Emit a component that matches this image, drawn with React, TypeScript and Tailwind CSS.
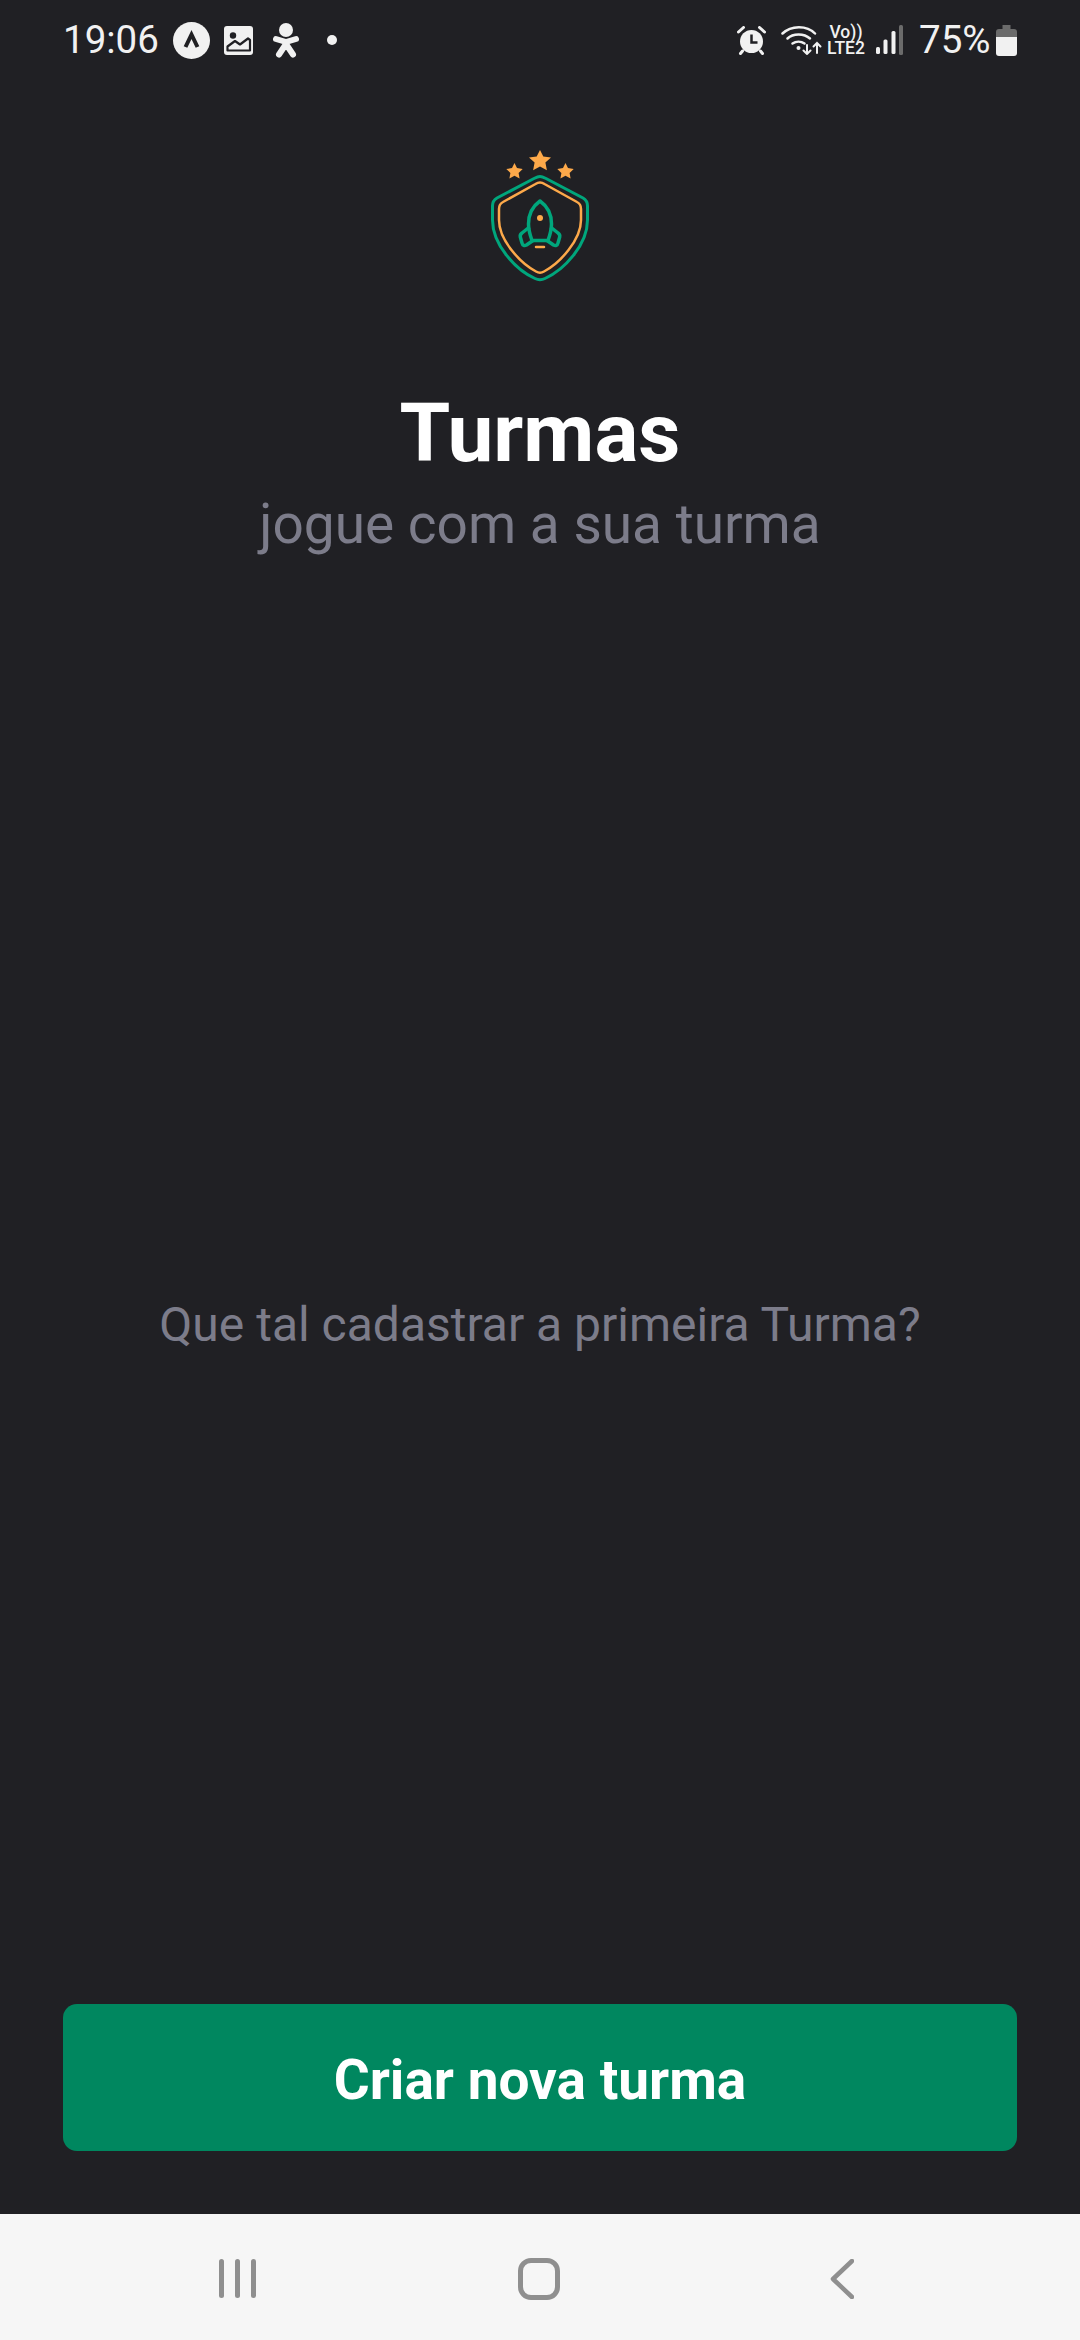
import React from 'react';

function Logo() {
  return (
    <svg width="100" height="134" viewBox="0 0 100 134" fill="none">
      <g fill="#FDA94A">
        <path d="M50 0l3.300 6.500 7.700 1-5.600 5.100 1.500 7.600-6.900-3.600-6.900 3.600 1.500-7.600-5.600-5.100 7.700-1z" />
        <path d="M24.500 13l2.500 5.100 5.700.8-4.100 4 1 5.600-5.100-2.700-5.100 2.700 1-5.600-4.100-4 5.700-.8z" />
        <path d="M75.500 13l2.500 5.100 5.700.8-4.100 4 1 5.600-5.100-2.700-5.100 2.700 1-5.600-4.100-4 5.700-.8z" />
      </g>
      <path
        d="M50 26.500C48 26.500 46 27.500 44 28.500L7 48C3.500 50 2.500 52 2.500 56V70C2.500 95 26 120 45 128.500C48 130 52 130 55 128.500C74 120 97.500 95 97.500 70V56C97.500 52 96.500 50 93 48L56 28.500C54 27.500 52 26.500 50 26.500Z"
        stroke="#00A67C"
        strokeWidth="3"
      />
      <path
        d="M50 32.500C48.500 32.500 47 33 45.500 34L13 52C10 53.500 9 55.500 9 59V70C9 90 30 113 46 121.500C48.500 123 51.500 123 54 121.500C70 113 91 90 91 70V59C91 55.500 90 53.500 87 52L54.500 34C53 33 51.500 32.500 50 32.500Z"
        stroke="#FDA94A"
        strokeWidth="2.500"
      />
      <path
        d="M50 51C43 56 38.500 64 38.500 74C38.500 80 40 85 42 90.500H58C60 85 61.500 80 61.500 74C61.500 64 57 56 50 51Z"
        stroke="#00A67C"
        strokeWidth="3.500"
        strokeLinejoin="round"
      />
      <path d="M39.500 77L32 83C30.500 84 30 85.500 30.300 87L32 93C32.500 95.500 34.500 96 36.500 95L43 90.500" stroke="#00A67C" strokeWidth="3.500" strokeLinejoin="round" />
      <path d="M60.500 77L68 83C69.500 84 70 85.500 69.700 87L68 93C67.500 95.500 65.500 96 63.500 95L57 90.500" stroke="#00A67C" strokeWidth="3.500" strokeLinejoin="round" />
      <circle cx="50" cy="68" r="3" fill="#FDA94A" />
      <path d="M46 97H54" stroke="#FDA94A" strokeWidth="2.500" strokeLinecap="round" />
    </svg>
  );
}

function LeftIcons() {
  return (
    <div className="flex items-center">
      <svg width="37" height="37" viewBox="0 0 37 37">
        <circle cx="18.500" cy="18.500" r="18.500" fill="#f1f1f1" />
        <path d="M12.500 25L18.500 12.500 24.500 25" fill="none" stroke="#202024" strokeWidth="4" />
      </svg>
      <svg width="29" height="29" viewBox="0 0 29 29" className="ml-[14px]">
        <rect width="29" height="29" rx="3" fill="#f1f1f1" />
        <circle cx="9" cy="9.500" r="3.200" fill="#202024" />
        <path d="M3.500 24.500V20.500L11 15 16 18.500 24 12.500 26 14V24.500Z" fill="none" stroke="#202024" strokeWidth="2.200" strokeLinejoin="round" />
      </svg>
      <svg width="26" height="35" viewBox="0 0 26 35" className="ml-[20px]">
        <circle cx="13" cy="7" r="7" fill="#f1f1f1" />
        <path d="M3 16L13 19 23 16M13 19V21M13 21L6 31.500M13 21L20 31.500" fill="none" stroke="#f1f1f1" strokeWidth="6" strokeLinecap="round" strokeLinejoin="round" />
      </svg>
      <div className="ml-[28px] size-[10px] rounded-full bg-[#f1f1f1]" />
    </div>
  );
}

function RightIcons() {
  return (
    <div className="flex items-center">
      <svg width="29" height="29" viewBox="0 0 29 29">
        <circle cx="14.500" cy="15.500" r="11.500" fill="#f1f1f1" />
        <path d="M14.500 8.500V16.500H20.500" fill="none" stroke="#202024" strokeWidth="2.500" />
        <path d="M1.500 6L6.500 1.500M27.500 6L22.500 1.500M5.500 25L3.500 27.500M23.500 25L25.500 27.500" stroke="#f1f1f1" strokeWidth="3" strokeLinecap="round" />
      </svg>
      <svg width="41" height="30" viewBox="0 0 41 30" className="ml-[15px]">
        <g fill="none" stroke="#f1f1f1" strokeWidth="2.500" strokeLinecap="round">
          <path d="M1.500 8.500C10 0 26 0 34 8.500" />
          <path d="M6.500 13.500C12 8 23 8 29 13.500" />
          <path d="M11.500 18.500C15 16 20 16 23.500 18.500" />
          <path d="M26 20V29M22.500 25.500L26 29 29.500 25.500" strokeWidth="2" />
          <path d="M36 28V18M32.500 21.500L36 18 39.500 21.500" strokeWidth="2" />
        </g>
        <circle cx="17.500" cy="23" r="2" fill="#f1f1f1" />
      </svg>
      <div className="ml-[4px] flex w-[40px] flex-col items-center text-[17.500px] leading-[16px] font-medium text-[#f1f1f1]">
        <span>Vo))</span>
        <span>LTE2</span>
      </div>
      <svg width="27" height="30" viewBox="0 0 27 30" className="ml-[10px]">
        <rect x="0" y="22" width="4" height="7" rx="1.500" fill="#f1f1f1" />
        <rect x="7.500" y="14.500" width="4" height="14.500" rx="1.500" fill="#f1f1f1" />
        <rect x="15.500" y="6" width="4" height="23" rx="1.500" fill="#f1f1f1" />
        <rect x="23" y="0" width="4" height="30" rx="1.500" fill="#6b6b6b" />
      </svg>
      <span className="ml-[16px] w-[69px] text-[38.500px] leading-[40px] text-[#f1f1f1]">75%</span>
      <svg width="21" height="31" viewBox="0 0 21 31" className="ml-[8px]">
        <path d="M6.500 0H14.500V4H18C20 4 21 5 21 7V12H0V7C0 5 1 4 3 4H6.500Z" fill="#6b6b6b" />
        <path d="M0 12H21V28C21 30 20 31 18 31H3C1 31 0 30 0 28Z" fill="#f1f1f1" />
      </svg>
    </div>
  );
}

export default function App() {
  return (
    <div className="flex h-[2340px] w-[1080px] flex-col bg-[#202024] font-['Roboto',sans-serif]">
      <div className="flex h-[80px] items-center justify-between px-[63px]">
        <div className="flex items-center">
          <span className="w-[110px] text-[38.500px] leading-[40px] text-[#f1f1f1]">19:06</span>
          <LeftIcons />
        </div>
        <RightIcons />
      </div>

      <div className="flex flex-1 flex-col px-[63px]">
        <div className="mt-[70px] flex justify-center">
          <Logo />
        </div>
        <h1 className="mt-[105px] text-center text-[82px] leading-[88px] font-bold text-white">Turmas</h1>
        <p className="mt-[16px] text-center text-[55px] leading-[62px] text-[#7c7c8a]">jogue com a sua turma</p>
        <div className="flex flex-1 items-center justify-center pt-[90px]">
          <p className="text-[48px] leading-[56px] text-[#7c7c8a]">Que tal cadastrar a primeira Turma?</p>
        </div>
        <button className="mb-[63px] flex h-[147px] w-full items-center justify-center rounded-[14px] bg-[#00875f] pt-[5px] text-[55px] font-bold text-white">
          Criar nova turma
        </button>
      </div>

      <div className="flex h-[126px] items-center bg-[#f6f6f6] pt-[3px] pl-[219px]">
        <div className="flex h-[39px] w-[37px] justify-between">
          <div className="w-[5px] rounded-full bg-[#8f8f8f]" />
          <div className="w-[5px] rounded-full bg-[#8f8f8f]" />
          <div className="w-[5px] rounded-full bg-[#8f8f8f]" />
        </div>
        <div className="ml-[262px] h-[42px] w-[42px] rounded-[13px] border-[5px] border-[#8f8f8f]" />
        <svg width="24" height="40" viewBox="0 0 24 40" className="ml-[270px]">
          <path d="M22 2L3 20 22 38" fill="none" stroke="#8f8f8f" strokeWidth="4.500" strokeLinecap="round" strokeLinejoin="round" />
        </svg>
      </div>
    </div>
  );
}
